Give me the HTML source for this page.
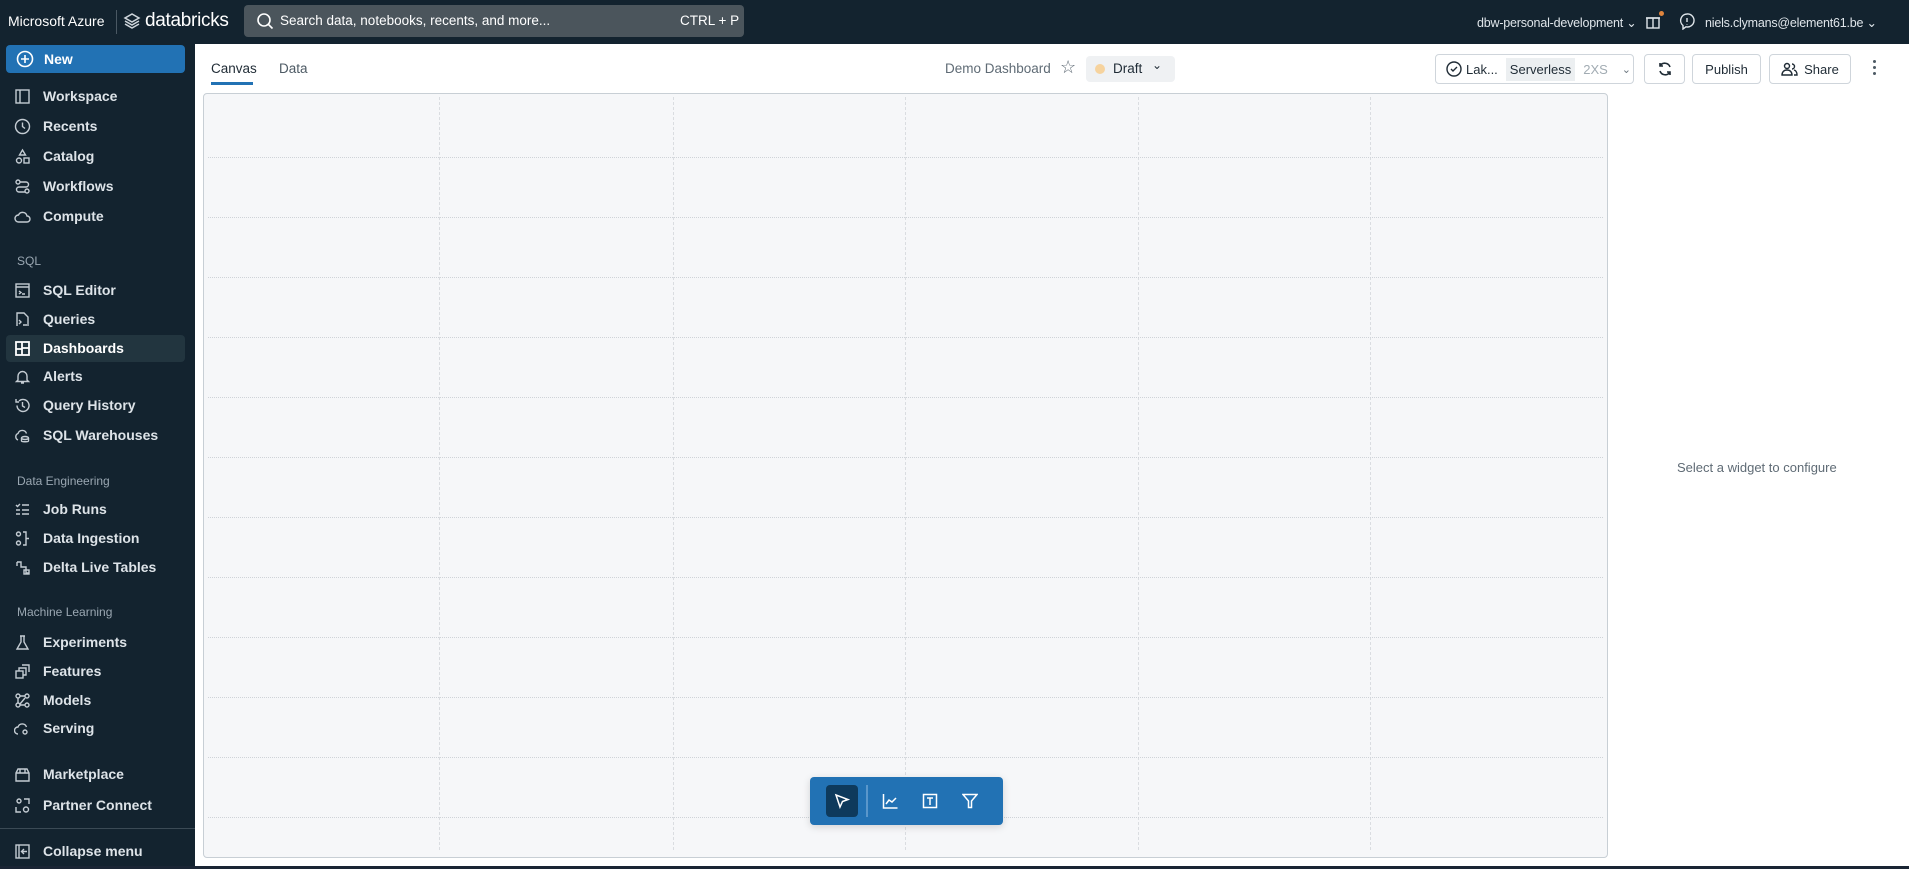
<!DOCTYPE html>
<html><head><meta charset="utf-8"><style>
*{box-sizing:border-box;margin:0;padding:0}
body{width:1909px;height:869px;overflow:hidden;background:#fff;font-family:"Liberation Sans",sans-serif;position:relative}
.a{position:absolute}
#top{left:0;top:0;width:1909px;height:44px;background:#13232f}
#side{left:0;top:44px;width:195px;height:822px;background:#13232f}
.it{position:absolute;left:14px;color:#dde3e8;font-size:14px;font-weight:bold;display:flex;align-items:center;height:26px}
.it svg{width:17px;height:17px;margin-right:12px;stroke:#c4ccd3;fill:none;stroke-width:1.4}
.sec{position:absolute;left:17px;color:#9aa7b2;font-size:12px}
.vl{position:absolute;top:97px;height:753px;border-left:1px dashed #dadde1}
.hl{position:absolute;left:208px;width:1395px;border-top:1px dotted #cfd3d8}
.btn{position:absolute;top:54px;height:30px;border:1px solid #cfd5db;border-radius:4px;background:#fff;font-size:13px;color:#1f2b35;display:flex;align-items:center;justify-content:center}
</style></head><body>
<div id="top" class="a">
 <div class="a" style="left:8px;top:13px;color:#fff;font-size:14px">Microsoft Azure</div>
 <div class="a" style="left:116px;top:10px;width:1px;height:24px;background:#4a5863"></div>
 <svg class="a" style="left:123px;top:12px" width="18" height="20" viewBox="0 0 18 20" fill="none" stroke="#cfd6dc" stroke-width="1.5"><path d="M9 2L2 6l7 4 7-4zM2 9l7 4 7-4M2 12l7 4 7-4"/></svg>
 <div class="a" style="left:145px;top:10px;color:#fff;font-size:19px;letter-spacing:-0.3px">databricks</div>
 <div class="a" style="left:244px;top:5px;width:500px;height:32px;background:#4b555c;border-radius:4px"></div>
 <svg class="a" style="left:256px;top:12px" width="18" height="18" viewBox="0 0 18 18" fill="none" stroke="#fff" stroke-width="1.6"><circle cx="8" cy="8" r="6"/><path d="M12.5 12.5l4 4"/></svg>
 <div class="a" style="left:280px;top:13px;color:#fff;font-size:13.5px">Search data, notebooks, recents, and more...</div>
 <div class="a" style="left:680px;top:13px;color:#fff;font-size:13.5px">CTRL + P</div>
 <div class="a" style="left:1477px;top:15px;color:#dfe5ea;font-size:12.5px;letter-spacing:-0.2px">dbw-personal-development ⌄</div>
 <svg class="a" style="left:1644px;top:12px" width="18" height="18" viewBox="0 0 18 18" fill="none" stroke="#dfe5ea" stroke-width="1.4"><rect x="3" y="6" width="12" height="10"/><path d="M2 6h14M9 6v10"/></svg>
 <div class="a" style="left:1659px;top:11px;width:5px;height:5px;border-radius:50%;background:#e0853d"></div>
 <svg class="a" style="left:1678px;top:12px" width="18" height="18" viewBox="0 0 18 18" fill="none" stroke="#dfe5ea" stroke-width="1.4"><path d="M9 2a6.5 6.5 0 0 0-4 11.5L5 17l3-2.2A6.5 6.5 0 1 0 9 2z"/><path d="M9 6v4M9 12v.5"/></svg>
 <div class="a" style="left:1705px;top:15px;color:#dfe5ea;font-size:12.5px;letter-spacing:-0.2px">niels.clymans@element61.be ⌄</div>
</div>
<div id="side" class="a">
 <div class="a" style="left:6px;top:1px;width:179px;height:28px;background:#2272b4;border-radius:4px;color:#fff;font-weight:bold;font-size:14px;display:flex;align-items:center;padding-left:10px"><svg width="18" height="18" viewBox="0 0 18 18" fill="none" stroke="#fff" stroke-width="1.6" style="margin-right:10px"><circle cx="9" cy="9" r="7.5"/><path d="M9 5v8M5 9h8"/></svg>New</div>
 <div class="a" style="left:6px;top:291px;width:179px;height:27px;background:#22353f;border-radius:4px"></div>
</div>
<div class="it" style="top:83px"><svg viewBox="0 0 17 17"><rect x="2" y="2" width="13" height="13"/><path d="M6 2v13"/></svg>Workspace</div>
<div class="it" style="top:113px"><svg viewBox="0 0 17 17"><circle cx="8.5" cy="8.5" r="7"/><path d="M8.5 4.5v4l2.5 2"/></svg>Recents</div>
<div class="it" style="top:143px"><svg viewBox="0 0 17 17"><path d="M8.5 2l3 5h-6z"/><circle cx="5" cy="12.5" r="2.5"/><rect x="10" y="10" width="5" height="5"/></svg>Catalog</div>
<div class="it" style="top:173px"><svg viewBox="0 0 17 17"><circle cx="4" cy="4" r="2"/><circle cx="13" cy="13" r="2"/><path d="M6 4h6a2.5 2.5 0 0 1 0 5H5a2.5 2.5 0 0 0 0 5h6"/></svg>Workflows</div>
<div class="it" style="top:203px"><svg viewBox="0 0 17 17"><path d="M4.5 14a3.5 3.5 0 0 1 0-7 4.5 4.5 0 0 1 8.5 1 3 3 0 0 1 0 6z"/></svg>Compute</div>
<div class="sec" style="top:254px">SQL</div>
<div class="it" style="top:277px"><svg viewBox="0 0 17 17"><rect x="2" y="2" width="13" height="13"/><path d="M2 5h13M5 9l2 1.5L5 12M8 12h3"/></svg>SQL Editor</div>
<div class="it" style="top:306px"><svg viewBox="0 0 17 17"><path d="M3 15V2h7l4 4v9"/><path d="M5 9l2 2-2 2M9 14h4"/></svg>Queries</div>
<div class="it" style="top:335px;color:#fff"><svg viewBox="0 0 17 17" style="stroke:#fff;stroke-width:1.8"><rect x="2" y="2" width="13" height="13"/><path d="M8 2v13M8 8h7M2 9h6"/></svg>Dashboards</div>
<div class="it" style="top:363px"><svg viewBox="0 0 17 17"><path d="M4 12V8a4.5 4.5 0 0 1 9 0v4l1.5 1.5h-12zM7 15h3"/></svg>Alerts</div>
<div class="it" style="top:392px"><svg viewBox="0 0 17 17"><path d="M3 8.5a6 6 0 1 0 2-4.5M2 2v3h3M8.5 5v4l2.5 1.5"/></svg>Query History</div>
<div class="it" style="top:422px"><svg viewBox="0 0 17 17"><path d="M4 13a3.5 3.5 0 0 1 0-6.5 4.5 4.5 0 0 1 8.5 0"/><ellipse cx="11" cy="11" rx="3.5" ry="1.5"/><path d="M7.5 11v3c0 1 7 1 7 0v-3"/></svg>SQL Warehouses</div>
<div class="sec" style="top:474px">Data Engineering</div>
<div class="it" style="top:496px"><svg viewBox="0 0 17 17"><path d="M2 4l1.5 1.5L6 3M8 4h7M2 9h4M8 9h7M2 13h4M8 13h7"/></svg>Job Runs</div>
<div class="it" style="top:525px"><svg viewBox="0 0 17 17"><circle cx="4.5" cy="4" r="2"/><circle cx="4.5" cy="13" r="2"/><path d="M9 2h3v13H9M15 8.5h-3"/></svg>Data Ingestion</div>
<div class="it" style="top:554px"><svg viewBox="0 0 17 17"><path d="M3 3h4v5h5v6h3M3 3v4"/><rect x="10" y="11" width="5" height="4"/></svg>Delta Live Tables</div>
<div class="sec" style="top:605px">Machine Learning</div>
<div class="it" style="top:629px"><svg viewBox="0 0 17 17"><path d="M6 2h5M7 2v6l-4 7h11l-4-7V2"/></svg>Experiments</div>
<div class="it" style="top:658px"><svg viewBox="0 0 17 17"><rect x="2" y="8" width="7" height="7"/><path d="M5 8V5h7v7H9M8 2h7v7"/></svg>Features</div>
<div class="it" style="top:687px"><svg viewBox="0 0 17 17"><circle cx="4" cy="4" r="2"/><circle cx="13" cy="4" r="2"/><circle cx="4" cy="13" r="2"/><circle cx="13" cy="13" r="2"/><path d="M6 4h5M4 6v5M6 12l5-6M6 13h5"/></svg>Models</div>
<div class="it" style="top:715px"><svg viewBox="0 0 17 17"><path d="M4 14a3.5 3.5 0 0 1 0-7 4.5 4.5 0 0 1 8.5 0"/><circle cx="11" cy="12" r="2"/></svg>Serving</div>
<div class="it" style="top:761px"><svg viewBox="0 0 17 17"><path d="M2 7l2-4h9l2 4v8H2zM2 7h13M6 3v4M11 3v4"/></svg>Marketplace</div>
<div class="it" style="top:792px"><svg viewBox="0 0 17 17"><circle cx="5" cy="4" r="2"/><path d="M10 2h5v5M2 10v5h5"/><circle cx="12" cy="12.5" r="2.5"/></svg>Partner Connect</div>
<div class="a" style="left:0;top:828px;width:195px;height:1px;background:#3b4a55"></div>
<div class="it" style="top:838px"><svg viewBox="0 0 17 17"><rect x="2" y="2" width="13" height="13"/><path d="M5 2v13M13 8.5H8M10 6l-2.5 2.5L10 11"/></svg>Collapse menu</div>
<div class="a" style="left:0;top:866px;width:1909px;height:3px;background:#1a2534"></div>

<div class="a" style="left:211px;top:61px;font-size:13.5px;color:#1f2b35">Canvas</div>
<div class="a" style="left:211px;top:82px;width:42px;height:3px;background:#2272b4"></div>
<div class="a" style="left:279px;top:61px;font-size:13.5px;color:#4d5a64">Data</div>
<div class="a" style="left:945px;top:61px;font-size:13.5px;color:#5f6b75">Demo Dashboard</div>
<div class="a" style="left:1060px;top:57px;font-size:18px;color:#5f6b75">☆</div>
<div class="a" style="left:1086px;top:56px;width:89px;height:26px;background:#eff1f3;border-radius:4px"></div>
<div class="a" style="left:1095px;top:64px;width:10px;height:10px;border-radius:50%;background:#f6d39e"></div>
<div class="a" style="left:1113px;top:61px;font-size:13.5px;color:#1f2b35">Draft</div>
<div class="a" style="left:1152px;top:58px;font-size:12px;color:#1f2b35">⌄</div>
<div class="btn" style="left:1435px;width:199px;justify-content:flex-start;padding-left:10px"><svg width="16" height="16" viewBox="0 0 16 16" fill="none" stroke="#1f2b35" stroke-width="1.4"><circle cx="8" cy="8" r="7"/><path d="M5 8l2 2 4-4"/></svg><span style="margin-left:4px">Lak...</span><span style="margin-left:8px;background:#eceff1;padding:4px 4px">Serverless</span><span style="margin-left:8px;color:#a2acb3">2XS</span><span style="margin-left:14px;color:#6a757e;font-size:11px">⌄</span></div>
<div class="btn" style="left:1644px;width:41px"><svg width="16" height="16" viewBox="0 0 16 16" fill="none" stroke="#1f2b35" stroke-width="1.6"><path d="M13 6a5.5 5.5 0 0 0-10-1M3 10a5.5 5.5 0 0 0 10 1M3 2v3h3M13 14v-3h-3"/></svg></div>
<div class="btn" style="left:1692px;width:69px">Publish</div>
<div class="btn" style="left:1769px;width:82px"><svg width="17" height="16" viewBox="0 0 17 16" fill="none" stroke="#1f2b35" stroke-width="1.4" style="margin-right:6px"><circle cx="6" cy="5" r="2.5"/><path d="M1 14c0-3 2-5 5-5s5 2 5 5zM11 3a2.5 2.5 0 0 1 0 5M13 9c2 .5 3 2.5 3 5h-3"/></svg>Share</div>
<div class="a" style="left:1873px;top:60px;width:3px;line-height:0">
 <div style="width:3px;height:3px;background:#4d5a64;border-radius:50%;margin-bottom:3px"></div><div style="width:3px;height:3px;background:#4d5a64;border-radius:50%;margin-bottom:3px"></div><div style="width:3px;height:3px;background:#4d5a64;border-radius:50%"></div></div>

<div class="a" style="left:203px;top:93px;width:1405px;height:765px;background:#f6f7f9;border:1px solid #c8cfd5;border-radius:4px"></div>
<div class="vl" style="left:439px"></div><div class="vl" style="left:673px"></div><div class="vl" style="left:905px"></div><div class="vl" style="left:1138px"></div><div class="vl" style="left:1370px"></div>
<div class="hl" style="top:157px"></div><div class="hl" style="top:217px"></div><div class="hl" style="top:277px"></div><div class="hl" style="top:337px"></div><div class="hl" style="top:397px"></div><div class="hl" style="top:457px"></div><div class="hl" style="top:517px"></div><div class="hl" style="top:577px"></div><div class="hl" style="top:637px"></div><div class="hl" style="top:697px"></div><div class="hl" style="top:757px"></div><div class="hl" style="top:817px"></div>

<div class="a" style="left:1677px;top:460px;font-size:13px;color:#5f6b75">Select a widget to configure</div>

<div class="a" style="left:810px;top:777px;width:193px;height:48px;background:#2272b4;border-radius:4px;box-shadow:0 2px 8px rgba(0,0,0,.15)"></div>
<div class="a" style="left:826px;top:785px;width:32px;height:32px;background:#0e3a5c;border-radius:4px"></div>
<svg class="a" style="left:834px;top:793px" width="16" height="16" viewBox="0 0 16 16" fill="none" stroke="#fff" stroke-width="1.5"><path d="M2 2l12 4.5-5.5 2L6 14z"/></svg>
<div class="a" style="left:866px;top:785px;width:2px;height:32px;background:#5a97cb"></div>
<svg class="a" style="left:882px;top:793px" width="16" height="16" viewBox="0 0 16 16" fill="none" stroke="#fff" stroke-width="1.5"><path d="M1.5 1v14h14M4 11l3-4 3 2 4-4"/></svg>
<svg class="a" style="left:922px;top:793px" width="16" height="16" viewBox="0 0 16 16" fill="none" stroke="#fff" stroke-width="1.5"><rect x="1.5" y="1.5" width="13" height="13"/><path d="M5 5h6M8 5v7"/></svg>
<svg class="a" style="left:962px;top:793px" width="16" height="16" viewBox="0 0 16 16" fill="none" stroke="#fff" stroke-width="1.5"><path d="M1 1.5h14L9.5 8v6.5h-3V8z"/></svg>
</body></html>
